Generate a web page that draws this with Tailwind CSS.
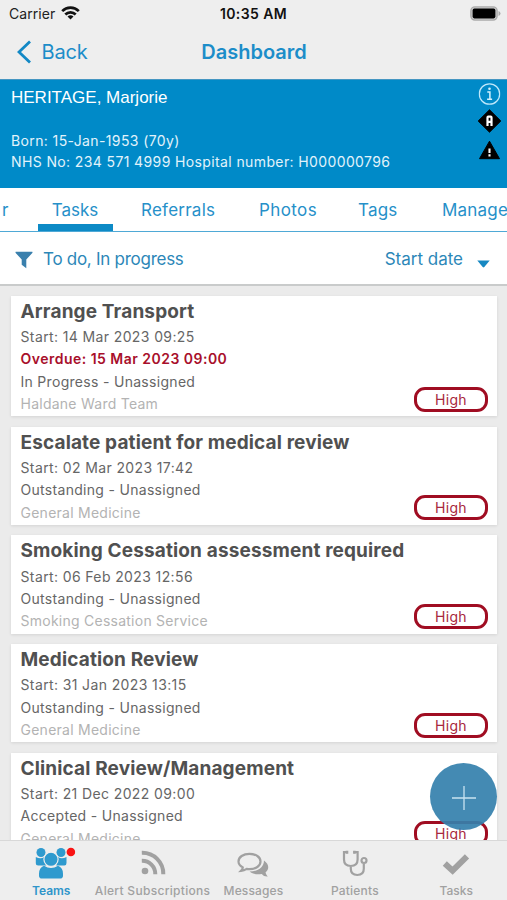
<!DOCTYPE html>
<html lang="en">
<head>
<meta charset="utf-8">
<title>Dashboard</title>
<script src="https://cdn.jsdelivr.net/npm/@tailwindcss/browser@4"></script>
</head>
<body class="bg-[#ebebeb] font-['Inter','Liberation_Sans',sans-serif]">
<div class="relative flex h-[900px] w-[507px] flex-col overflow-hidden whitespace-nowrap">

  <header class="h-[79px] shrink-0 bg-[#eeeeee]">
    <div class="grid h-[27px] grid-cols-3 items-center pl-[9px] pr-[7px] text-[14px] text-[#222]">
      <div class="flex items-center gap-[6px]"><span class="tracking-[0.05px]">Carrier</span>
        <svg class="-mt-[2px] h-[14px] w-[19px]" viewBox="0 0 19 14" fill="none" stroke="#111" stroke-width="2.7"><path d="M1.2 5.1a11.8 11.8 0 0 1 16.6 0M4.3 8.5a7.4 7.4 0 0 1 10.4 0"/><path d="M9.5 13.6 6.5 10.6a4.3 4.3 0 0 1 6 0Z" fill="#111" stroke="none"/></svg>
      </div>
      <div class="-ml-[2px] text-center font-semibold tracking-[0.4px] text-[#111]">10:35 AM</div>
      <div class="flex justify-end"><svg class="-mt-px h-[15px] w-[31px] translate-x-[1px]" viewBox="0 0 31 15"><rect x=".9" y=".9" width="26.2" height="13.2" rx="4" fill="#ccc" stroke="#aaa" stroke-width="1.4"/><rect x="2.600" y="2.600" width="22.800" height="9.800" rx="1.800" fill="#000"/><path d="M28.5 5v5q2-.8 2-2.500T28.500 5Z" fill="#aaa"/></svg></div>
    </div>
    <div class="grid h-[50px] grid-cols-3 items-center pl-[17px] pr-[16px] text-[20px] text-[#1c8dc9]">
      <div class="flex items-center gap-[10px]"><svg class="h-[24px] w-[15px]" viewBox="0 0 15 24" fill="none" stroke="#1288c5" stroke-width="2.800"><path d="M13 1.500 2 12l11 10.500"/></svg><span class="-ml-[0.5px] tracking-[-0.200px]">Back</span></div>
      <div class="text-center font-semibold">Dashboard</div>
    </div>
  </header>

  <section class="flex h-[109px] shrink-0 justify-between border-t border-[#4596c2] bg-[#008ac8] pl-[11px] pr-[6px] text-white">
    <div class="pt-[7px]">
      <div class="h-[43px] font-['Liberation_Sans',sans-serif] text-[17px] leading-[21px]">HERITAGE, Marjorie</div>
      <div class="text-[14px] leading-[21px] tracking-[0.380px] text-[#e2f3fb]">
        <div>Born: 15-Jan-1953 (70y)</div>
        <div>NHS No: 234 571 4999 Hospital number: H000000796</div>
      </div>
    </div>
    <div class="flex flex-col items-center pt-[3px]">
      <svg class="h-[22px] w-[22px] translate-x-[0.5px]" viewBox="0 0 22 22" fill="none"><circle cx="11" cy="11" r="10.200" stroke="#bde7fa" stroke-width="1.300"/><path d="M8.800 9H11.400V16M8.600 16.300H13.600" stroke="#d4f1fd" stroke-width="1.500"/><circle cx="11" cy="5.800" r="1.300" fill="#d4f1fd"/></svg>
      <svg class="mt-[4px] h-[24px] w-[24px] translate-x-[0.5px]" viewBox="0 0 24 24"><path d="M12 .8 23.300 12 12 23.200.7 12Z" fill="#000" stroke="#000" stroke-linejoin="round"/><path d="M10 17V8.500Q10 7.700 10.800 7.700H13.200Q14 7.700 14 8.500V17M10 12.800H14" fill="none" stroke="#fff" stroke-width="2.200"/></svg>
      <svg class="mt-[7px] h-[20px] w-[22px] translate-x-[0.5px]" viewBox="0 0 22 20"><path d="M11 1.200 21 18.700H1Z" fill="#000" stroke="#000" stroke-linejoin="round"/><path d="M11 8.500v4.500M11 14.300v2.100" stroke="#fff" stroke-width="2.100"/></svg>
    </div>
  </section>

  <nav class="flex h-[44px] shrink-0 overflow-hidden border-b border-[#4fa9d6] bg-white text-[17px] leading-[44px] tracking-[0.2px] text-[#2690c9]">
    <div class="w-[38px] shrink-0 pl-[2px]">r</div>
    <div class="h-[43px] w-[75px] shrink-0 border-b-[7px] border-[#0d8ac6] pr-[1px] text-center tracking-[0px]">Tasks</div>
    <div class="w-[146px] shrink-0 pl-[28px] tracking-[0.250px]">Referrals</div>
    <div class="w-[99px] shrink-0 tracking-[0.4px]">Photos</div>
    <div class="w-[84px] shrink-0">Tags</div>
    <div class="shrink-0">Manage</div>
  </nav>

  <div class="flex h-[54px] shrink-0 items-center border-b-2 border-[#c9cbcb] bg-white pl-[15px] pr-[17px] pt-[4px] text-[17px] text-[#2c87b8]">
    <svg class="h-[18px] w-[18px]" viewBox="0 0 18 18" fill="#3a80ad"><path d="M.7.7H17.300Q17.800 1.300 17.300 2L11.300 8.500V17.300L6.700 13.800V8.500L.7 2Q.2 1.300.7.700Z"/></svg>
    <span class="ml-[10px] tracking-[-0.27px]">To do, In progress</span>
    <span class="ml-auto">Start date</span>
    <svg class="ml-[14px] mt-[7px] h-[8px] w-[13px]" viewBox="0 0 13 8"><path d="M.3.500H12.700L7.300 7Q6.500 7.800 5.700 7Z" fill="#1688c2"/></svg>
  </div>

  <main id="list" class="flex min-h-0 flex-1 flex-col gap-[10.200px] overflow-hidden pl-[11px] pr-[10px] pt-[9.600px]"></main>

  <div class="absolute left-[430px] top-[763px] grid h-[67px] w-[67px] place-items-center rounded-full bg-[#3480ac]/92">
    <svg class="mt-[2px] h-[24px] w-[24px]" viewBox="0 0 24 24" stroke="#c9e3f1" stroke-width="1.300"><path d="M12 0V24M0 12H24"/></svg>
  </div>

  <footer class="grid h-[60px] shrink-0 grid-cols-5 border-t border-[#d8d8d8] bg-[#eeeeee] text-[12px] font-medium text-[#a1a1a1]">
    <div class="flex flex-col items-center">
      <svg class="mt-[6px] h-[33px] w-[44px] translate-x-[2.500px]" viewBox="0 0 44 33" fill="#2f9ace">
        <circle cx="9.500" cy="5.500" r="4.500"/><circle cx="29.500" cy="5.500" r="4.500"/>
        <path d="M4.300 10q5 2.500 8.500 0l2 1.200V18.500h-8q-2.500 0-2.500-2.500ZM35 10q-5 2.500-8.500 0l-1.700 1.200V18.500h8q2.200 0 2.200-2.500Z"/>
        <circle cx="19.500" cy="12.300" r="7.100" stroke="#eee" stroke-width="1.200"/>
        <path d="M12.500 18.700q7 4.500 14 0 5 1.800 5 8v2q0 2.800-3 2.800h-18q-3 0-3-2.800v-2q0-6.200 5-8Z"/>
        <circle cx="39.400" cy="5" r="4.300" fill="#f91414"/>
      </svg>
      <div class="mt-[2px] translate-x-[0.500px] font-semibold text-[#2f95ca]">Teams</div>
    </div>
    <div class="flex flex-col items-center">
      <svg class="mt-[9px] h-[25px] w-[25px] translate-x-[1px]" viewBox="0 0 25 25" fill="none" stroke="#a1a1a1" stroke-width="4"><circle cx="4" cy="21" r="3.300" fill="#a1a1a1" stroke="none"/><path d="M.8 10.700A13.200 13.200 0 0 1 14.300 24.200M.8 2.800A21 21 0 0 1 22.300 24.200"/></svg>
      <div class="mt-[7px] translate-x-[0.500px] tracking-[0.300px]">Alert Subscriptions</div>
    </div>
    <div class="flex flex-col items-center">
      <svg class="mt-[11px] h-[26px] w-[32px]" viewBox="0 0 32 26" fill="none" stroke="#a1a1a1" stroke-width="2.200"><path d="M27 8.500c5.500 4 5.200 9 1.600 11.700.2 1.700 1 2.800 2.200 4.200-2.800.2-4.600-.7-6-2.500-4.800 1.100-9.300.1-12.200-2.300 8 0 14.400-4.300 14.400-11.100Z" fill="#a1a1a1" stroke="none"/><path d="M12.500 1.800c6.300 0 11 3.300 11 7.700s-4.700 7.700-11 7.700c-1 0-1.900-.1-2.800-.3-1.700 1.200-3.400 1.900-5.700 2 1.200-1.100 1.700-2.200 1.800-3.500-2.700-1.500-4.300-3.500-4.300-5.900 0-4.400 4.700-7.700 11-7.700Z"/></svg>
      <div class="mt-[4px] tracking-[0.15px]">Messages</div>
    </div>
    <div class="flex flex-col items-center">
      <svg class="mt-[9px] h-[27px] w-[26px]" viewBox="0 0 26 27" fill="none" stroke="#a1a1a1" stroke-width="2.200"><path d="M5.800 2.200H2v7.300q0 6.500 6.800 6.500t6.800-6.500V2.200h-3.800M8.800 16v2.800q0 6.200 6.500 6.200t6.500-6.200V13.500"/><circle cx="22" cy="10.500" r="2.500"/><path d="M5 .8v3M12.400.8v3" stroke-width="2.600"/></svg>
      <div class="mt-[5px] tracking-[0.2px]">Patients</div>
    </div>
    <div class="flex flex-col items-center">
      <svg class="mt-[12px] h-[23px] w-[28px]" viewBox="0 0 28 23" fill="none" stroke="#a1a1a1" stroke-width="6"><path d="M2.800 10.500 10.600 17.700 25 3.300"/></svg>
      <div class="mt-[6px]">Tasks</div>
    </div>
  </footer>
</div>

<script>
const tasks = [
  { title: 'Arrange Transport', start: '14 Mar 2023 09:25', overdue: '15 Mar 2023 09:00', status: 'In Progress', team: 'Haldane Ward Team' },
  { title: 'Escalate patient for medical review', start: '02 Mar 2023 17:42', status: 'Outstanding', team: 'General Medicine' },
  { title: 'Smoking Cessation assessment required', start: '06 Feb 2023 12:56', status: 'Outstanding', team: 'Smoking Cessation Service' },
  { title: 'Medication Review', start: '31 Jan 2023 13:15', status: 'Outstanding', team: 'General Medicine' },
  { title: 'Clinical Review/Management', start: '21 Dec 2022 09:00', status: 'Accepted', team: 'General Medicine' },
];
document.getElementById('list').innerHTML = tasks.map(t => `
  <article class="flex shrink-0 items-end justify-between bg-white pb-[1.100px] pl-[9.500px] pr-[9px] shadow-[0_1px_3px_rgba(0,0,0,0.100)]">
    <div class="text-[14px] leading-[22.300px] text-[#666]">
      <h2 class="h-[30.500px] text-[19px] font-bold leading-[31.500px] tracking-[0.140px] text-[#505050]">${t.title}</h2>
      <p class="tracking-[0.380px]">Start: ${t.start}</p>
      ${t.overdue ? `<p class="font-semibold tracking-[0.480px] text-[#a80f2b]">Overdue: ${t.overdue}</p>` : ''}
      <p class="tracking-[0.300px]">${t.status} - Unassigned</p>
      <p class="tracking-[0.250px] text-[#b3b3b3]">${t.team}</p>
    </div>
    <div class="mb-[3.500px] h-[25px] w-[74px] rounded-[11px] border-3 border-[#a00d22] text-center text-[14px] leading-[19px] tracking-[0.300px] text-[#a8283d]">High</div>
  </article>`).join('');
</script>
</body>
</html>
